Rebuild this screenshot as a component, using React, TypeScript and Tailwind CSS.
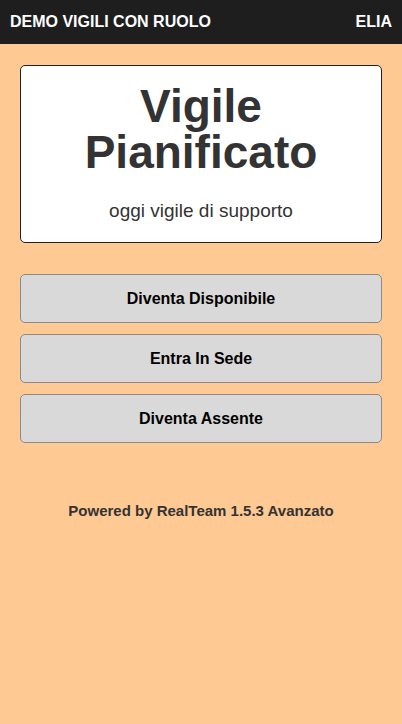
export default function App() {
  const actions = ["Diventa Disponibile", "Entra In Sede", "Diventa Assente"]

  return (
    <div
      className="min-h-[724px] bg-[#ffc993] text-[#333]"
      style={{ fontFamily: '"Liberation Sans", Arial, sans-serif' }}
    >
      <header className="flex h-11 items-center justify-between bg-[#1e1e1e] px-[10px] text-[16px] font-bold text-white">
        <span>DEMO VIGILI CON RUOLO</span>
        <span>ELIA</span>
      </header>

      <main className="px-5 pt-[21px]">
        <section className="flex flex-col items-center rounded-[5px] border border-[#222] bg-white pt-[17px] pb-[17px]">
          <h1 className="text-center text-[46px] leading-[46px] font-bold text-[#333]">
            Vigile
            <br />
            Pianificato
          </h1>
          <p className="mt-[22px] text-[19px] leading-[28px] text-[#333]">oggi vigile di supporto</p>
        </section>

        <div className="mt-[31px] flex flex-col gap-[11px]">
          {actions.map((a) => (
            <button
              key={a}
              className="h-[49px] w-full rounded-[5px] border border-[#8a8a8a] bg-[#d9d9d9] text-[16px] font-bold text-black"
            >
              {a}
            </button>
          ))}
        </div>

        <p className="mt-[58px] text-center text-[15px] leading-5 font-bold text-[#333]">
          Powered by RealTeam 1.5.3 Avanzato
        </p>
      </main>
    </div>
  )
}
